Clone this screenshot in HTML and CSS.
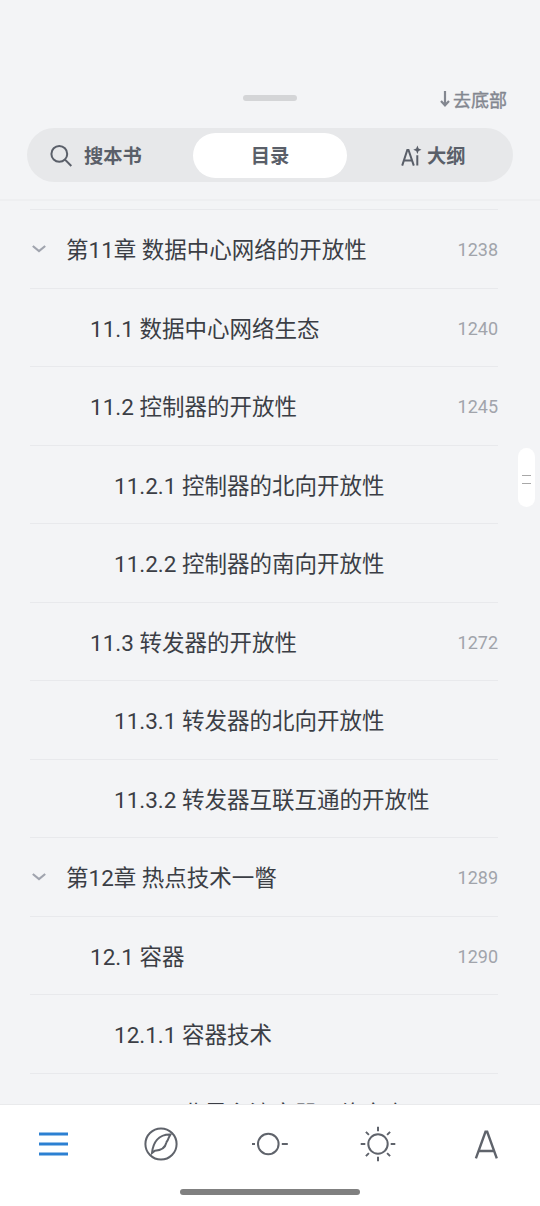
FILE: index.html
```html
<!DOCTYPE html>
<html lang="zh-CN">
<head>
    <meta charset="UTF-8">
    <meta name="viewport" content="width=device-width, initial-scale=1.0">
    <title>目录</title>
    <link rel="stylesheet" href="styles.css">
</head>
<body>
    <div class="reader">
        <header class="header">
            <div class="top-row">
                <span class="drag-handle"></span>
                <a class="to-bottom">
                    <svg width="12" height="18" viewBox="0 0 12 18" fill="none" stroke="currentColor" stroke-width="2.2"><path d="M6 1v14M2 11l4 4.3 4-4.3"/></svg>去底部
                </a>
            </div>
            <nav class="tabs">
                <div class="tab tab-search">
                    <svg width="24" height="24" viewBox="0 0 24 24" fill="none" stroke="currentColor" stroke-width="2"><circle cx="10.3" cy="9.9" r="7.9"/><path d="M16 15.6l6.3 6.4"/></svg>
                    <span>搜本书</span>
                </div>
                <div class="tab active"><span>目录</span></div>
                <div class="tab tab-ai">
                    <svg width="22" height="24" viewBox="0 0 22 24" fill="none" stroke="currentColor" stroke-width="2"><path d="M1.2 21.6L6.3 6h1.2l5.3 15.6M3.3 16.4h7.6M16.3 11.2v10.4"/><path d="M16.4 1.6l1.2 3 2.9 1.2-2.9 1.2-1.2 3-1.2-3-2.9-1.2 2.9-1.2z" fill="currentColor" stroke="none"/></svg>
                    <span>大纲</span>
                </div>
            </nav>
        </header>

        <main class="toc">
            <div class="row chapter">
                <svg class="chevron" width="16" height="10" viewBox="0 0 16 10"><path d="M1.8 2l6.2 5 6.2-5"/></svg>
                <span class="title">第11章 数据中心网络的开放性</span><span class="page">1238</span>
            </div>
            <div class="row section"><span class="title">11.1 数据中心网络生态</span><span class="page">1240</span></div>
            <div class="row section"><span class="title">11.2 控制器的开放性</span><span class="page">1245</span></div>
            <div class="row subsection"><span class="title">11.2.1 控制器的北向开放性</span></div>
            <div class="row subsection"><span class="title">11.2.2 控制器的南向开放性</span></div>
            <div class="row section"><span class="title">11.3 转发器的开放性</span><span class="page">1272</span></div>
            <div class="row subsection"><span class="title">11.3.1 转发器的北向开放性</span></div>
            <div class="row subsection"><span class="title">11.3.2 转发器互联互通的开放性</span></div>
            <div class="row chapter">
                <svg class="chevron" width="16" height="10" viewBox="0 0 16 10"><path d="M1.8 2l6.2 5 6.2-5"/></svg>
                <span class="title">第12章 热点技术一瞥</span><span class="page">1289</span>
            </div>
            <div class="row section"><span class="title">12.1 容器</span><span class="page">1290</span></div>
            <div class="row subsection"><span class="title">12.1.1 容器技术</span></div>
            <div class="row subsection"><span class="title">12.1.2 业界主流容器网络方案</span></div>
        </main>

        <footer class="footer">
            <nav class="toolbar">
                <a class="tool active"><svg width="36" height="36" viewBox="0 0 36 36"><path d="M4 8h29M4 18h29M4 28h29" stroke-width="3"/></svg></a>
                <a class="tool"><svg width="36" height="36" viewBox="0 0 36 36"><circle cx="18" cy="18" r="15.6"/><path d="M9 27C10 17 15 8.2 27.5 8.5c-1.2 2-2 3.5-2.6 5.3-.3 1.2-1.2 1.2-1.5 2.7-1.3 5.8-5.6 8-11.5 8.2L9 27z"/></svg></a>
                <a class="tool"><svg width="36" height="36" viewBox="0 0 36 36"><circle cx="16.3" cy="18" r="10.3"/><path d="M0 18h3M29.8 18h6"/></svg></a>
                <a class="tool"><svg width="36" height="36" viewBox="0 0 36 36"><circle cx="18" cy="18" r="9.7"/><path d="M18 .7v4.6M18 30.7v4.6M.7 18h4.6M30.7 18h4.6M5.9 5.9l3 3M27.1 27.1l3 3M30.1 5.9l-3 3M8.9 27.1l-3 3"/></svg></a>
                <a class="tool"><svg width="36" height="36" viewBox="0 0 36 36"><path d="M7.9 32.3L17.5 5.8h1.7l9.6 26.5M11.3 25h14.1" stroke-width="2.4"/></svg></a>
            </nav>
            <div class="home-bar"></div>
        </footer>

        <!-- scrollbar thumb, floats over the list -->
        <div class="scroll-thumb"><i></i><i></i></div>
    </div>
</body>
</html>
```
FILE: styles.css
```css
* {
    box-sizing: border-box;
}

body {
    margin: 0;
    font-family: Roboto, "Noto Sans CJK SC", sans-serif;
    background-color: #f3f4f6;
    color: #3b3e45;
}

svg {
    display: block;
    flex: none;
}

.reader {
    position: relative;
    display: flex;
    flex-direction: column;
    height: 1206px;
    max-width: 540px;
    overflow: hidden;
}

.header {
    height: 201px;
    padding: 86px 27px 0;
    border-bottom: 2px solid #eeeff1;
    flex: none;
}

.top-row {
    display: grid;
    grid-template-columns: 1fr 54px 1fr;
    height: 42px;
}

.drag-handle {
    grid-column: 2;
    height: 6px;
    margin-top: 9px;
    border-radius: 3px;
    background-color: #d4d5d7;
}

.to-bottom {
    display: flex;
    align-items: center;
    justify-content: flex-end;
    gap: 2px;
    height: 26px;
    padding-right: 6px;
    font-size: 18px;
    -webkit-text-stroke: 0.4px #838790;
    color: #838790;
}

.tabs {
    display: grid;
    grid-template-columns: 161px 154px 1fr;
    height: 54px;
    padding: 5px;
    border-radius: 27px;
    background-color: #e7e8ea;
}

.tab {
    display: flex;
    align-items: center;
    height: 45px;
    font-size: 19.3px;
    font-weight: 600;
    color: #5a5f69;
}

.tab span {
    margin-top: -2px;
}

.tab-search {
    gap: 11px;
    padding-left: 17px;
}

.tab-ai {
    gap: 4px;
    padding-left: 54px;
}

.tab.active {
    justify-content: center;
    border-radius: 23px;
    background-color: #fff;
}

.toc {
    flex: 1;
    min-height: 0;
    margin: 8px 42px 0 30px;
    border-top: 1px solid #e8e9ec;
    overflow: hidden;
}

.row {
    display: flex;
    align-items: center;
    height: 78.53px;
    padding-top: 2px;
    border-bottom: 1px solid #e8e9ec;
    font-size: 22.5px;
    white-space: nowrap;
}

.title {
    margin-top: -3px;
}

.chevron {
    margin: -2px 19px 0 1px;
    fill: none;
    stroke: #a0a4ae;
    stroke-width: 2.2;
}

.section {
    padding-left: 60px;
}

.subsection {
    padding-left: 84px;
}

.page {
    margin-left: auto;
    font-size: 18px;
    color: #a1a4ab;
}

.footer {
    flex: none;
    height: 102px;
    border-top: 1px solid #e9eaec;
    background-color: #fff;
}

.toolbar {
    display: flex;
    justify-content: space-between;
    height: 77px;
    padding: 0 36px 0 35px;
    align-items: center;
}

.tool svg {
    overflow: visible;
    fill: none;
    stroke: #5f636b;
    stroke-width: 2;
}

.tool.active svg {
    stroke: #2c80d2;
}

.home-bar {
    width: 180px;
    height: 6px;
    margin: 7px auto 0;
    border-radius: 3px;
    background-color: #808080;
}

.scroll-thumb {
    position: absolute;
    top: 448px;
    right: 5px;
    display: flex;
    flex-direction: column;
    align-items: center;
    justify-content: center;
    gap: 7px;
    width: 17px;
    height: 59px;
    padding-top: 3px;
    border-radius: 9px;
    background-color: #fff;
}

.scroll-thumb i {
    width: 9px;
    height: 1px;
    background-color: #a8a8a8;
}
```
